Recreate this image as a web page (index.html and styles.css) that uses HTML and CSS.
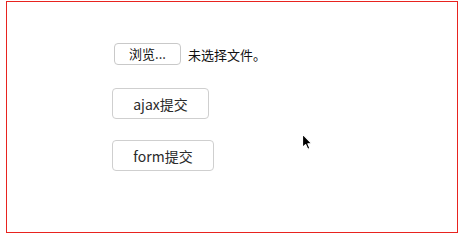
FILE: index.html
```html
<!DOCTYPE html>
<html lang="zh-CN">
<head>
<meta charset="utf-8">
<title>上传</title>
<link rel="stylesheet" href="styles.css">
</head>
<body>
<div class="frame">
  <div class="file-row">
    <button class="file-btn" type="button">浏览...</button>
    <span class="file-name">未选择文件。</span>
  </div>
  <button class="btn btn-ajax" type="button">ajax提交</button>
  <button class="btn btn-form" type="button">form提交</button>
  <svg class="cursor" width="14" height="18" viewBox="0 0 14 18">
    <path d="M1.5 1 L1.5 14.5 L4.6 11.6 L6.8 16.4 L9 15.4 L6.9 10.8 L11 10.8 Z" fill="#000" stroke="#fff" stroke-width="1.2" stroke-linejoin="round"/>
  </svg>
</div>
</body>
</html>
```
FILE: styles.css
```css
html, body {
  margin: 0;
  padding: 0;
  background: #fff;
}
body {
  font-family: "Noto Sans CJK SC", "Noto Sans", "Liberation Sans", sans-serif;
  font-size: 13px;
  color: #222;
}
.frame {
  position: relative;
  box-sizing: border-box;
  margin: 1px 0 0 6px;
  width: 452px;
  height: 232px;
  border: 1px solid #e8231f;
  padding: 41px 0 0 105px;
  display: flex;
  flex-direction: column;
  align-items: flex-start;
}
.file-row {
  display: flex;
  align-items: center;
  margin-left: 2px;
  height: 22px;
}
.file-btn {
  box-sizing: border-box;
  width: 67px;
  height: 22px;
  padding: 0;
  border: 1px solid #c9c9c9;
  border-radius: 4px;
  background: #fff;
  font: inherit;
  font-size: 13px;
  line-height: 20px;
  color: #111;
}
.file-name {
  margin-left: 7px;
  font-size: 13px;
  color: #111;
}
.btn {
  box-sizing: border-box;
  height: 31px;
  padding: 0;
  border: 1px solid #cfcfcf;
  border-radius: 4px;
  background: #fff;
  font: inherit;
  font-size: 14px;
  color: #2a2a2a;
  text-align: center;
}
.btn-ajax {
  width: 97px;
  margin-top: 23px;
}
.btn-form {
  width: 102px;
  margin-top: 21px;
}
.cursor {
  position: absolute;
  left: 294px;
  top: 131px;
}
```
